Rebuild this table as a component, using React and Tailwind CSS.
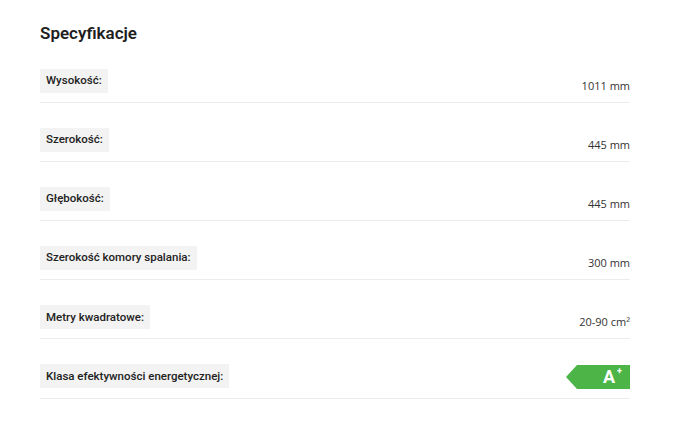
import React from "react";

const rows = [
  ["Wysokość:", "1011 mm"],
  ["Szerokość:", "445 mm"],
  ["Głębokość:", "445 mm"],
  ["Szerokość komory spalania:", "300 mm"],
  ["Metry kwadratowe:", "20-90 cm²"],
  ["Klasa efektywności energetycznej:", null],
];

function Badge() {
  return (
    <div className="relative w-[64px] h-[24px]">
      <svg width="64" height="24" viewBox="0 0 64 24" className="absolute inset-0">
        <polygon points="11,0 64,0 64,24 11,24 0,12" fill="#4db548" />
      </svg>
      <span
        className="absolute left-[37px] top-[2px] text-white text-[18px] leading-[20px] font-bold"
        style={{ fontFamily: "Roboto, sans-serif" }}
      >
        A
      </span>
      <span
        className="absolute left-[51px] top-[2px] text-white text-[9px] leading-[9px] font-bold"
        style={{ fontFamily: "Roboto, sans-serif" }}
      >
        +
      </span>
    </div>
  );
}

export default function App() {
  return (
    <div className="w-[696px] h-[432px] bg-white">
      <div className="pl-[40px] w-[630px]">
        <h2
          className="pt-[23px] h-[43.5px] text-[17px] leading-[20px] font-semibold text-[#1e1e1e]"
          style={{ fontFamily: "Roboto, sans-serif" }}
        >
          Specyfikacje
        </h2>
        {rows.map(([label, value], i) => (
          <div
            key={i}
            className="flex items-end justify-between border-b border-[#ececec] pt-[25px] pb-[9.2px]"
          >
            <div
              className="h-[24px] px-[6px] bg-[#f3f3f3] flex items-center text-[11.5px] font-medium text-[#222]"
              style={{ fontFamily: "Roboto, sans-serif" }}
            >
              {label}
            </div>
            {value ? (
              <div
                className="text-[11px] leading-[16px] text-[#333] mb-[-1px]"
                style={{ fontFamily: "'Open Sans', sans-serif" }}
              >
                {value}
              </div>
            ) : (
              <div className="mb-[-1px]">
                <Badge />
              </div>
            )}
          </div>
        ))}
      </div>
    </div>
  );
}
